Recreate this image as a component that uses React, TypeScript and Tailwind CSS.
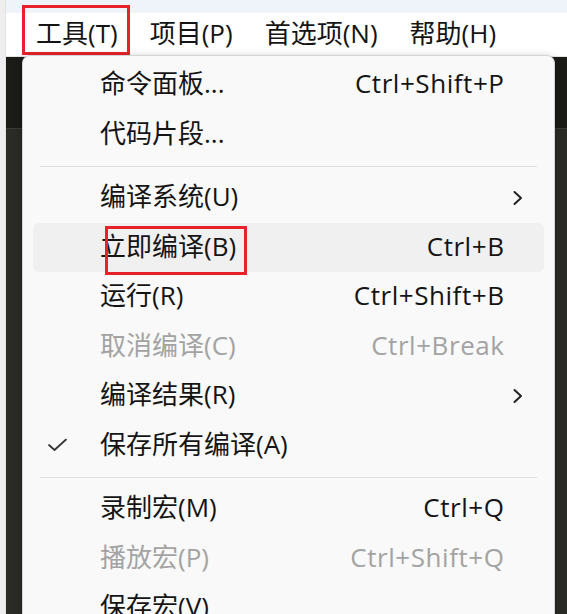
import React from "react"

type Item =
  | { kind: "sep" }
  | {
      kind: "item"
      label: string
      shortcut?: string
      disabled?: boolean
      submenu?: boolean
      checked?: boolean
      active?: boolean
    }

const MENU_BAR = ["工具(T)", "项目(P)", "首选项(N)", "帮助(H)"]

const ITEMS: Item[] = [
  { kind: "item", label: "命令面板...", shortcut: "Ctrl+Shift+P" },
  { kind: "item", label: "代码片段..." },
  { kind: "sep" },
  { kind: "item", label: "编译系统(U)", submenu: true },
  { kind: "item", label: "立即编译(B)", shortcut: "Ctrl+B", active: true },
  { kind: "item", label: "运行(R)", shortcut: "Ctrl+Shift+B" },
  { kind: "item", label: "取消编译(C)", shortcut: "Ctrl+Break", disabled: true },
  { kind: "item", label: "编译结果(R)", submenu: true },
  { kind: "item", label: "保存所有编译(A)", checked: true },
  { kind: "sep" },
  { kind: "item", label: "录制宏(M)", shortcut: "Ctrl+Q" },
  { kind: "item", label: "播放宏(P)", shortcut: "Ctrl+Shift+Q", disabled: true },
  { kind: "item", label: "保存宏(V)" },
]

const FONT = { fontFamily: '"Open Sans", "Noto Sans CJK SC", sans-serif' }

function Check() {
  return (
    <svg className="w-[19px] h-[13px]" viewBox="0 0 19 13" fill="none">
      <path d="M1 6.5L6.5 11.5L18 1" stroke="#333" strokeWidth={1.7} strokeLinecap="round" strokeLinejoin="round" />
    </svg>
  )
}

function Chevron() {
  return (
    <svg className="w-[10px] h-[15px]" viewBox="0 0 10 15" fill="none">
      <path d="M1.5 1.5L8 7.5L1.5 13.5" stroke="#222" strokeWidth={2} strokeLinecap="round" strokeLinejoin="round" />
    </svg>
  )
}

export default function App() {
  return (
    <div className="w-[567px] h-[614px] flex overflow-hidden relative text-[26px] leading-none" style={FONT}>
      {/* left window edge */}
      <div className="w-[6px] h-full bg-[#eeeeee] border-r border-[#e2e2e2]" />

      <div className="flex-1 flex flex-col">
        <div className="h-[13px] bg-[#eef4f9]" />

        {/* Menu bar */}
        <div className="h-[44px] bg-white border-b border-[#e4e4e4] flex items-center pl-[14px] pb-[3px] text-[#141414]">
          {MENU_BAR.map((m, i) => (
            <div key={m} className="relative px-[16px] h-full flex items-center">
              {m}
              {i === 0 && (
                <div className="absolute left-[2px] top-[-8px] w-[108px] h-[50px] border-[3px] border-[#e8222b]" />
              )}
            </div>
          ))}
        </div>

        {/* Editor background */}
        <div className="h-[71px] bg-[#1b1c18]" />
        <div className="flex-1 bg-[#2a2b26] border-t border-[#3a3b35]" />
      </div>

      {/* Dropdown menu */}
      <div className="absolute left-[22px] top-[55px] w-[533px] h-[600px] bg-[#f9f9f9] border border-[#d4d4d4] rounded-t-[8px] px-[10px] pt-[4px] shadow-[0_2px_8px_rgba(0,0,0,0.25)]">
        {ITEMS.map((it, i) =>
          it.kind === "sep" ? (
            <div key={i} className="h-[14px] flex items-center mx-[7px]">
              <div className="h-px w-full bg-[#e0e0e0]" />
            </div>
          ) : (
            <div
              key={i}
              className={`relative h-[49.5px] flex items-center pl-[67px] pr-[40px] pb-[3px] rounded-[6px] ${
                it.active ? "bg-[#f0f0f0]" : ""
              } ${it.disabled ? "text-[#a3a3a3]" : "text-[#141414]"}`}
            >
              {it.checked && (
                <div className="absolute left-[15px] top-1/2 -translate-y-1/2 flex">
                  <Check />
                </div>
              )}
              <span className="flex-1">{it.label}</span>
              {it.shortcut && <span className="tracking-[0.55px] mr-[-0.5px]">{it.shortcut}</span>}
              {it.submenu && (
                <div className="absolute right-[21px] top-1/2 -translate-y-1/2 flex">
                  <Chevron />
                </div>
              )}
              {it.active && (
                <div className="absolute left-[72px] top-[3px] w-[142px] h-[49px] border-[3px] border-[#e8222b]" />
              )}
            </div>
          )
        )}
      </div>
    </div>
  )
}
